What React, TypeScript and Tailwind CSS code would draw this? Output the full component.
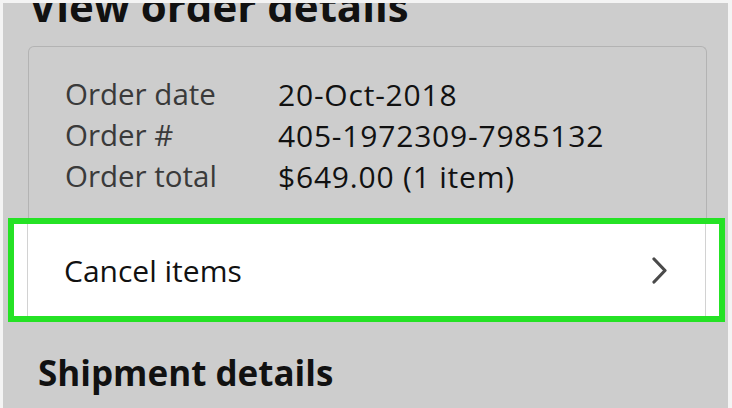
const rows = [
  { label: "Order date", value: "20-Oct-2018" },
  { label: "Order #", value: "405-1972309-7985132" },
  { label: "Order total", value: "$649.00 (1 item)" },
];

const Chevron = () => (
  <svg width="15" height="27" viewBox="0 0 15 27" fill="none">
    <polyline
      points="2,2 13,13.5 2,25"
      stroke="#4a4a4a"
      strokeWidth="3.2"
      strokeLinecap="round"
      strokeLinejoin="round"
    />
  </svg>
);

export default function App() {
  return (
    <div
      className="w-[732px] h-[408px] overflow-hidden bg-[#f4f4f4] pt-[3px] pl-[3px] pr-[4px]"
      style={{ fontFamily: '"Open Sans", "Noto Sans", sans-serif' }}
    >
      <div className="h-[405px] bg-[#cdcdcd] overflow-hidden">
        {/* titre coupé en haut */}
        <h1 className="mt-[-18px] ml-[26px] text-[42px] leading-none font-bold text-[#111]">
          View order details
        </h1>

        {/* carte commande */}
        <div className="mt-[19px] ml-[25px] mr-[21px] border border-b-0 border-[#b3b3b3] rounded-t-[6px] pt-[27px] pb-[21px] pl-[36px]">
          {rows.map((r) => (
            <div key={r.label} className="flex h-[41px] items-center">
              <span className="w-[213px] text-[29.5px] text-[#3a3a3a]">{r.label}</span>
              <span className="text-[30px] tracking-[0.8px] text-[#111]">{r.value}</span>
            </div>
          ))}
        </div>

        {/* ligne surlignée */}
        <div className="ml-[5px] mr-[3px] border-[6px] border-[#25e225] bg-white h-[104px]">
          <div className="mx-[13px] h-full border-x border-[#d2d2d2] flex items-center justify-between pl-[36px] pr-[38px]">
            <span className="text-[30px] text-[#111]">Cancel items</span>
            <Chevron />
          </div>
        </div>

        <h2 className="mt-[33px] ml-[35px] text-[35px] leading-none font-bold text-[#111]">
          Shipment details
        </h2>
      </div>
    </div>
  );
}
